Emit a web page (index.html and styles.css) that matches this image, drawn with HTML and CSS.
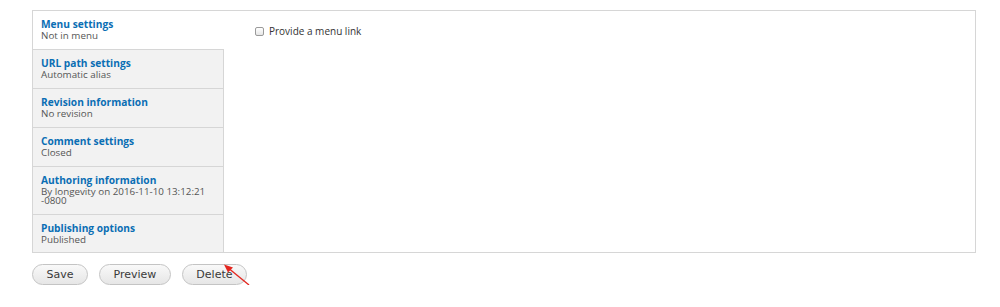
FILE: index.html
```html
<!DOCTYPE html>
<html>
<head>
<meta charset="utf-8">
<link rel="stylesheet" href="styles.css">
</head>
<body>
<div class="page">
  <div class="vtabs">
    <ul class="vt-menu">
      <li class="vt-item active"><a class="vt-title">Menu settings</a><span class="vt-summary">Not in menu</span></li>
      <li class="vt-item"><a class="vt-title">URL path settings</a><span class="vt-summary">Automatic alias</span></li>
      <li class="vt-item"><a class="vt-title">Revision information</a><span class="vt-summary">No revision</span></li>
      <li class="vt-item"><a class="vt-title">Comment settings</a><span class="vt-summary">Closed</span></li>
      <li class="vt-item"><a class="vt-title">Authoring information</a><span class="vt-summary">By longevity on 2016-11-10 13:12:21 -0800</span></li>
      <li class="vt-item last"><a class="vt-title">Publishing options</a><span class="vt-summary">Published</span></li>
    </ul>
    <div class="vt-pane">
      <label class="check"><span class="box"></span>Provide a menu link</label>
    </div>
  </div>
  <div class="actions">
    <button class="btn">Save</button>
    <button class="btn">Preview</button>
    <button class="btn">Delete</button>
    <svg class="arrow" width="40" height="34" viewBox="0 0 40 34">
      <line x1="33" y1="29" x2="11" y2="11" stroke="#e3261f" stroke-width="1.3"/>
      <polygon points="8,8.5 17,11.5 12,16.5" fill="#e3261f"/>
    </svg>
  </div>
</div>
</body>
</html>
```
FILE: styles.css
```css
* { box-sizing: border-box; }
html, body { margin: 0; padding: 0; background: #fff; }
.page { padding: 10px 24px 0 32px; position: relative; }
.vtabs {
  display: flex;
  border: 1px solid #d6d6d6;
  height: 243px;
  background: #fff;
}
.vt-menu {
  list-style: none;
  margin: 0;
  padding: 0;
  width: 191px;
  flex: none;
  display: flex;
  flex-direction: column;
}
.vt-item {
  background: #f2f2f2;
  border-right: 1px solid #d6d6d6;
  border-top: 1px solid #d6d6d6;
  padding: 7px 10px 0 8px;
  height: 39px;
  font-family: "Open Sans", sans-serif;
}
.vt-item.active { background: #fff; border-right-color: transparent; border-top: 0; height: 38px; padding-top: 7px; }
.vt-item:nth-child(5) { height: 48px; }
.vt-item.last { flex: 1; height: auto; }
.vt-title {
  display: block;
  color: #0a6eb4;
  font-weight: 700;
  font-size: 10.2px;
  line-height: 12px;
}
.vt-summary {
  display: block;
  color: #555;
  font-size: 9.8px;
  line-height: 11px;
}
.vt-item:nth-child(5) .vt-summary { line-height: 9px; margin-top: 1px; }
.vt-pane { flex: 1; padding: 14px 0 0 31px; }
.check {
  display: flex;
  align-items: center;
  font-family: "Open Sans", sans-serif;
  font-size: 10px;
  color: #333;
  line-height: 12px;
}
.box {
  width: 9px; height: 9px;
  border: 1px solid #9a9a9a;
  border-radius: 2px;
  background: linear-gradient(#fff, #e6e6e6);
  margin-right: 5px;
}
.actions { display: flex; gap: 11px; padding-top: 11px; position: relative; }
.btn {
  font-family: "DejaVu Sans", sans-serif;
  font-size: 11px;
  color: #3a3a3a;
  height: 21px;
  padding: 0 13.5px;
  border: 1px solid #c4c4c4;
  border-radius: 11px;
  background: linear-gradient(#f9f9f9, #e6e6e6);
  line-height: 19px;
}
.arrow { position: absolute; left: 184px; top: 3px; }
```
